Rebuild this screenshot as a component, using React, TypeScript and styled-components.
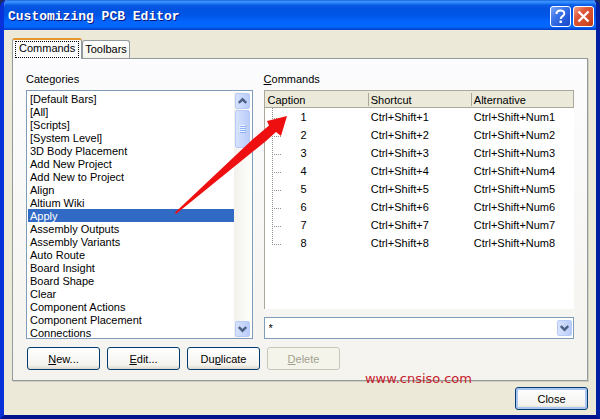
import React, { useState } from "react";
import styled, { createGlobalStyle, css } from "styled-components";

const ui = `"Liberation Sans", Arial, sans-serif`;

const GlobalStyle = createGlobalStyle`
  * { box-sizing: border-box; }
  body { margin: 0; background: #1c2a5c; }
  button, input, select, table { font: inherit; color: inherit; }
  button { cursor: default; }
`;

const Window = styled.main`
  position: relative;
  display: flex;
  flex-direction: column;
  min-height: 100vh;
  overflow: hidden;
  border: solid #0831d9;
  border-color: #0855dd #001ea0 #00138c #0831d9;
  border-width: 0 4px 4px;
  border-radius: 7px 7px 0 0;
  background: #ece9d8;
  color: #000;
  font: 11px/13px ${ui};
`;

const TitleBar = styled.header`
  display: flex;
  align-items: center;
  gap: 2px;
  height: 30px;
  margin: 0 -4px;
  padding: 3px 6px 0 8px;
  background: linear-gradient(#0a4fd0 0, #3f96ff 1px, #2a84f8 3px, #0a5be6 5px, #0053e0 9px, #0055e6 15px, #0366ff 22px, #0366fc 27px, #0148d0 29px, #003dd7 30px);
`;

const Title = styled.h1`
  flex: 1;
  margin: 0;
  color: #fff;
  font: bold 13px/18px "Liberation Mono", monospace;
  text-shadow: 1px 1px 0 #0a1883;
`;

const CaptionButton = styled.button<{ $close?: boolean }>`
  display: grid;
  place-items: center;
  width: 21px;
  height: 21px;
  padding: 0;
  border: 1px solid #fff;
  border-radius: 3px;
  background: ${(p) =>
    p.$close
      ? "linear-gradient(135deg, #f0a088, #e0573a 35%, #d04a24 75%, #b8330f)"
      : "linear-gradient(135deg, #7aa4f4, #3a72e8 40%, #2258d8 75%, #1a48c4)"};
`;

const Client = styled.div`
  display: flex;
  flex: 1;
  flex-direction: column;
  padding: 8px 8px 5px;
`;

const TabList = styled.div`
  display: flex;
  align-items: flex-end;
`;

const Tab = styled.button<{ $active: boolean }>`
  position: relative;
  height: ${(p) => (p.$active ? 21 : 18)}px;
  padding: 0 2px;
  border: 1px solid #919b9c;
  border-bottom: 0;
  border-radius: 3px 3px 0 0;
  background: ${(p) => (p.$active ? "#fcfcfe" : "linear-gradient(#fff, #f3f2ea)")};
  ${(p) =>
    p.$active &&
    css`
      z-index: 1;
      margin-bottom: -1px;
      border-top: 2px solid #e5972d;
    `}
`;

const TabText = styled.span<{ $active: boolean }>`
  display: block;
  padding: ${(p) => (p.$active ? "0 3px 2px" : "0")};
  border: ${(p) => (p.$active ? "1px dotted #000" : "0")};
`;

const Panel = styled.section`
  display: flex;
  flex: 1;
  flex-direction: column;
  gap: 8px;
  padding: 14px 13px 10px;
  border: 1px solid #919b9c;
  box-shadow: 1px 1px 0 #d0cebf;
  background: linear-gradient(#fcfcfe, #f4f3ee);
`;

const Columns = styled.div`
  display: grid;
  flex: 1;
  grid-template-columns: 227fr 311fr;
  gap: 11px;
`;

const Column = styled.div`
  display: flex;
  min-width: 0;
  flex-direction: column;
`;

const Label = styled.label`
  margin-bottom: 4px;
  line-height: 13px;
`;

const ListBox = styled.div`
  display: flex;
  flex: 1;
  padding: 1px 1px 0;
  border: 1px solid #7f9db9;
  background: #fff;
`;

const Options = styled.ul`
  flex: 1;
  margin: 0 0 -1px;
  padding: 0;
  list-style: none;
`;

const Option = styled.li<{ $selected: boolean }>`
  height: 13px;
  padding: 1px 0 0 2px;
  white-space: nowrap;
  background: ${(p) => (p.$selected ? "#316ac5" : "transparent")};
  color: ${(p) => (p.$selected ? "#fff" : "#000")};
`;

const ScrollBar = styled.div`
  display: flex;
  flex-direction: column;
  width: 17px;
  padding: 1px;
  background: linear-gradient(90deg, #f2f1ec, #fefefb);
`;

const blue = css`
  border: 1px solid #b8cbf6;
  border-radius: 2px;
  background: linear-gradient(90deg, #d6e2fe, #b9ccf9);
`;

const ArrowButton = styled.button`
  ${blue}
  display: grid;
  place-items: center;
  width: 15px;
  height: 16px;
  padding: 0;
`;

const Thumb = styled.div`
  ${blue}
  display: grid;
  place-items: center;
  width: 15px;
  height: 38px;
  margin: 1px 0 auto;
`;

const GridBox = styled.div`
  flex: 1;
  border-left: 1px solid #aca899;
  background: #fff;
`;

const Table = styled.table`
  width: 100%;
  table-layout: fixed;
  border-spacing: 0;
`;

const HeadCell = styled.th`
  position: relative;
  height: 18px;
  padding: 2px 3px 0;
  border-top: 1px solid #aca899;
  border-bottom: 1px solid #aca899;
  background: #ebe9da;
  font-weight: normal;
  text-align: left;
  &:last-child { border-right: 1px solid #aca899; }
  &:not(:first-child)::before {
    content: "";
    position: absolute;
    inset: 2px auto 1px 0;
    border-left: 1px solid #aca899;
  }
`;

const Cell = styled.td`
  height: 18px;
  padding: 0 3px;
  white-space: nowrap;
`;

const TreeCell = styled(Cell)`
  padding: 0 0 0 7px;
`;

const TreeItem = styled.div`
  display: flex;
  align-items: center;
  gap: 20px;
`;

const Combo = styled.div`
  display: flex;
  align-items: center;
  height: 22px;
  margin-top: 8px;
  padding: 1px;
  border: 1px solid #7f9db9;
  background: #fff;
`;

const ComboInput = styled.input`
  flex: 1;
  min-width: 0;
  height: 18px;
  padding: 0 3px;
  border: 0;
  outline: 0;
  background: transparent;
`;

const Actions = styled.div`
  display: flex;
  gap: 7px;
  padding-left: 1px;
`;

const PushButton = styled.button<{ $default?: boolean }>`
  width: 73px;
  height: 23px;
  padding: 1px 0 0;
  border: 1px solid #003c74;
  border-radius: 3px;
  background: linear-gradient(#fff, #f4f3ee 80%, #dcd8cc);
  ${(p) => p.$default && "box-shadow: inset 0 0 0 2px #a9c5f0;"}
  &:disabled {
    border-color: #c9c7ba;
    background: #f5f4ea;
    color: #a1a192;
  }
`;

const Footer = styled.footer`
  display: flex;
  justify-content: flex-end;
  padding-top: 6px;
`;

const Pointer = styled.svg`
  position: absolute;
  top: 110px;
  left: 166px;
  pointer-events: none;
`;

const Watermark = styled.span`
  position: absolute;
  right: 124px;
  bottom: 27px;
  color: #c8202c;
  font: 13px/18px "DejaVu Sans", sans-serif;
`;

const categories = [
  "[Default Bars]", "[All]", "[Scripts]", "[System Level]", "3D Body Placement",
  "Add New Project", "Add New to Project", "Align", "Altium Wiki", "Apply",
  "Assembly Outputs", "Assembly Variants", "Auto Route", "Board Insight",
  "Board Shape", "Clear", "Component Actions", "Component Placement", "Connections",
];

const commands = [1, 2, 3, 4, 5, 6, 7, 8];

const Chevron = ({ up }: { up?: boolean }) => (
  <svg width="9" height="8" viewBox="0 0 9 8" fill="none" stroke="#4d6185" strokeWidth="2.4">
    <path d={up ? "M.8 6 4.5 2.3 8.2 6" : "M.8 2 4.5 5.7 8.2 2"} />
  </svg>
);

const Branch = ({ last }: { last: boolean }) => (
  <svg width="9" height="18" viewBox="0 0 9 18" fill="none" stroke="#909090" strokeDasharray="1 1" display="block">
    <path d={last ? "M.5 0V10M0 10.5H9" : "M.5 0V18M0 10.5H9"} />
  </svg>
);

export default function App() {
  const [tab, setTab] = useState("Commands");
  const [selected, setSelected] = useState("Apply");
  return (
    <>
      <GlobalStyle />
      <Window>
        <TitleBar>
          <Title>Customizing PCB Editor</Title>
          <CaptionButton aria-label="Help">
            <svg width="13" height="15" viewBox="0 0 13 15" fill="none" stroke="#fff" strokeWidth="2">
              <path d="M2.5 5C2.5 2.5 4 1.5 6.3 1.5S10.3 2.7 10.3 4.7C10.3 7 6.7 7.3 6.7 10" />
              <path d="M6.7 11.5V14" strokeWidth="2.4" />
            </svg>
          </CaptionButton>
          <CaptionButton $close aria-label="Close window">
            <svg width="13" height="13" viewBox="0 0 13 13" stroke="#fff" strokeWidth="2.3">
              <path d="M1.5 1.5l10 10M11.5 1.5l-10 10" />
            </svg>
          </CaptionButton>
        </TitleBar>
        <Client>
          <TabList role="tablist">
            {["Commands", "Toolbars"].map((name) => (
              <Tab key={name} role="tab" aria-selected={tab === name} $active={tab === name} onClick={() => setTab(name)}>
                <TabText $active={tab === name}>{name}</TabText>
              </Tab>
            ))}
          </TabList>
          <Panel>
            <Columns>
              <Column>
                <Label id="categories">Categories</Label>
                <ListBox>
                  <Options role="listbox" aria-labelledby="categories">
                    {categories.map((c) => (
                      <Option key={c} role="option" aria-selected={c === selected} $selected={c === selected} onClick={() => setSelected(c)}>
                        {c}
                      </Option>
                    ))}
                  </Options>
                  <ScrollBar>
                    <ArrowButton aria-label="Scroll up"><Chevron up /></ArrowButton>
                    <Thumb>
                      <svg width="7" height="8" viewBox="0 0 7 8">
                        <path d="M0 .5H6M0 2.5H6M0 4.5H6M0 6.5H6" stroke="#eef4fe" />
                        <path d="M1 1.5H7M1 3.5H7M1 5.5H7M1 7.5H7" stroke="#8cb0f8" />
                      </svg>
                    </Thumb>
                    <ArrowButton aria-label="Scroll down"><Chevron /></ArrowButton>
                  </ScrollBar>
                </ListBox>
              </Column>
              <Column>
                <Label htmlFor="filter"><u>C</u>ommands</Label>
                <GridBox>
                  <Table>
                    <thead>
                      <tr>
                        <HeadCell>Caption</HeadCell>
                        <HeadCell>Shortcut</HeadCell>
                        <HeadCell>Alternative</HeadCell>
                      </tr>
                    </thead>
                    <tbody>
                      {commands.map((n) => (
                        <tr key={n}>
                          <TreeCell>
                            <TreeItem><Branch last={n === commands.length} />{n}</TreeItem>
                          </TreeCell>
                          <Cell>Ctrl+Shift+{n}</Cell>
                          <Cell>Ctrl+Shift+Num{n}</Cell>
                        </tr>
                      ))}
                    </tbody>
                  </Table>
                </GridBox>
                <Combo>
                  <ComboInput id="filter" defaultValue="*" />
                  <ArrowButton aria-label="Show filters"><Chevron /></ArrowButton>
                </Combo>
              </Column>
            </Columns>
            <Actions>
              <PushButton><u>N</u>ew...</PushButton>
              <PushButton><u>E</u>dit...</PushButton>
              <PushButton>Du<u>p</u>licate</PushButton>
              <PushButton disabled><u>D</u>elete</PushButton>
            </Actions>
          </Panel>
          <Footer>
            <PushButton $default>Close</PushButton>
          </Footer>
        </Client>
        <Pointer width="126" height="106" viewBox="170 110 126 106" aria-hidden="true">
          <path d="M175 212.5 253 139 269 125.500 267 121 287 116 281 136 276 132 266 141 176 214Z" fill="#ee1010" />
        </Pointer>
        <Watermark>www.cnsiso.com</Watermark>
      </Window>
    </>
  );
}
